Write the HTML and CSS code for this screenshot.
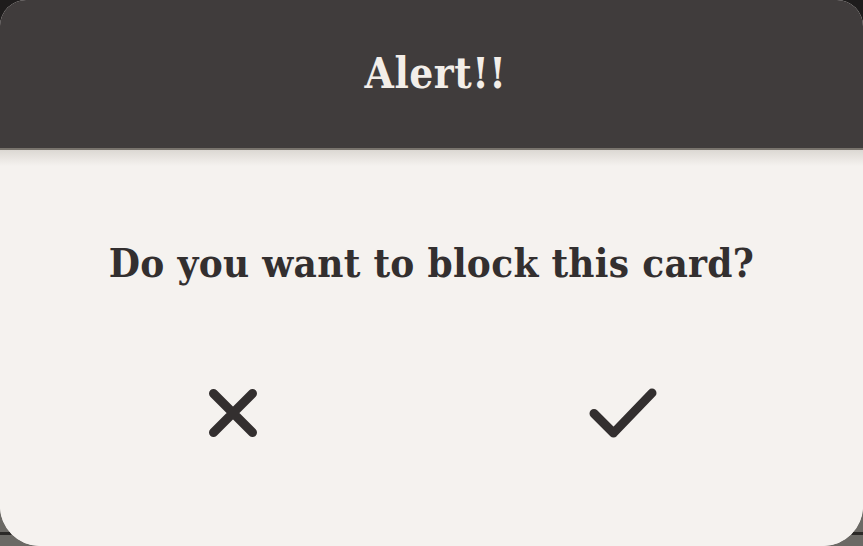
FILE: index.html
```html
<!DOCTYPE html>
<html lang="en">
<head>
<meta charset="utf-8">
<title>Alert</title>
<link rel="stylesheet" href="styles.css">
</head>
<body>
<div class="dialog">
  <header class="dialog-header">
    <h1 class="dialog-title">Alert!!</h1>
  </header>
  <main class="dialog-body">
    <p class="dialog-question">Do you want to block this card?</p>
    <div class="dialog-actions">
      <button class="action" aria-label="Cancel">
        <svg width="72" height="72" viewBox="0 0 72 72" aria-hidden="true">
          <path d="M16.5 16.5 L55.5 55.5 M55.5 16.5 L16.5 55.5" fill="none" stroke="currentColor" stroke-width="9" stroke-linecap="round"/>
        </svg>
      </button>
      <button class="action" aria-label="Confirm">
        <svg width="72" height="72" viewBox="0 0 72 72" aria-hidden="true">
          <path d="M7 36.5 L26.5 56 L65 16" fill="none" stroke="currentColor" stroke-width="9" stroke-linecap="round" stroke-linejoin="round"/>
        </svg>
      </button>
    </div>
  </main>
</div>
</body>
</html>
```

FILE: styles.css
```css
html, body {
  margin: 0;
  padding: 0;
}
body {
  width: 863px;
  height: 546px;
  overflow: hidden;
  background: linear-gradient(to bottom,
    #1e1c1c 0, #1e1c1c 273px,
    #6b6965 273px, #6b6965 532px,
    #2b2927 532px, #2b2927 535px,
    #6b6965 535px, #6b6965 100%);
  font-family: "DejaVu Serif Condensed", "DejaVu Serif", serif;
  font-stretch: condensed;
}
.dialog {
  width: 863px;
  height: 546px;
  border-radius: 26px 26px 40px 40px;
  overflow: hidden;
  background: #f5f2ef;
  display: flex;
  flex-direction: column;
}
.dialog-header {
  height: 148px;
  flex: none;
  background: #403c3c;
  border-bottom: 2px solid #79746d;
  display: flex;
  align-items: center;
  justify-content: center;
  padding-left: 8px;
}
.dialog-title {
  margin: 0;
  color: #f3eee9;
  font-size: 42px;
  font-weight: bold;
  letter-spacing: 0.5px;
  line-height: 48px;
}
.dialog-body {
  flex: 1;
  background: linear-gradient(to bottom, #dcd8d3 0, #f5f2ef 16px);
  padding-top: 89px;
  display: flex;
  flex-direction: column;
}
.dialog-question {
  margin: 0;
  text-align: center;
  color: #332f2f;
  font-size: 40px;
  font-weight: bold;
  letter-spacing: 0.3px;
  line-height: 48px;
}
.dialog-actions {
  display: grid;
  grid-template-columns: 390px 390px;
  padding-left: 38px;
  margin-top: 90px;
}
.action {
  justify-self: center;
  border: 0;
  background: none;
  padding: 0;
  color: #332f2f;
  display: flex;
}
```
